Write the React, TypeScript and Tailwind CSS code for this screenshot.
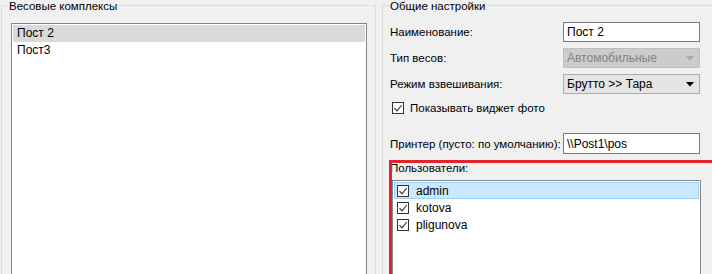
import React from 'react';

const font = { fontFamily: '"Liberation Sans", Arial, sans-serif' };

const Check = ({ className = '' }: { className?: string }) => (
  <span className={`flex h-[12px] w-[12px] shrink-0 items-center justify-center border border-[#333] bg-white ${className}`}>
    <svg width="10" height="10" viewBox="0 0 10 10">
      <path d="M1.5 5.2 L4 7.8 L8.8 2" fill="none" stroke="#333" strokeWidth="1.1" />
    </svg>
  </span>
);

const Arrow = ({ color }: { color: string }) => (
  <svg width="8" height="5" viewBox="0 0 8 5">
    <path d="M0 0 H8 L4 4.5 Z" fill={color} />
  </svg>
);

const GroupTitle = ({ text }: { text: string }) => (
  <span className="absolute left-[6px] top-[-6px] whitespace-nowrap bg-[#f0f0f0] px-[1px] text-[11.5px] leading-[12px] text-black">
    {text}
  </span>
);

const FormRow = ({ label, children, className = '' }: { label: string; children: React.ReactNode; className?: string }) => (
  <div className={`flex items-center ${className}`}>
    <div className="w-[173px] shrink-0 whitespace-nowrap text-[11.5px] leading-[14px] text-black">{label}</div>
    {children}
  </div>
);

const users = ['admin', 'kotova', 'pligunova'];

const App = () => {
  return (
    <div className="relative flex h-[274px] w-[712px] overflow-hidden bg-[#f0f0f0] text-[11.5px] leading-[14px]" style={font}>
      {/* Весовые комплексы */}
      <div className="relative ml-[1px] mt-[5px] h-[300px] w-[375px] shrink-0 border border-[#dcdcdc]">
        <GroupTitle text="Весовые комплексы" />
        <div className="ml-[9px] mt-[17px] h-[300px] w-[356px] border border-[#828790] bg-white p-[1px]">
          <div className="h-[17px] bg-[#d9d9d9] pl-[4px] text-[12px] leading-[17px] text-black">Пост 2</div>
          <div className="h-[17px] pl-[4px] text-[12px] leading-[17px] text-black">Пост3</div>
        </div>
      </div>

      {/* Общие настройки */}
      <div className="relative ml-[6px] mt-[5px] h-[300px] w-[340px] shrink-0 border border-[#dcdcdc] pl-[7px]">
        <GroupTitle text="Общие настройки" />
        <FormRow label="Наименование:" className="mt-[16px] h-[20px]">
          <div className="flex h-[20px] w-[137px] items-center border border-[#7a7a7a] bg-white pl-[3px] text-[12px] text-black">
            Пост 2
          </div>
        </FormRow>
        <FormRow label="Тип весов:" className="mt-[6px] h-[20px]">
          <div className="flex h-[20px] w-[137px] items-center justify-between border border-[#bfbfbf] bg-[#cccccc] pl-[3px] pr-[5px] text-[12px] text-[#838383]">
            Автомобильные
            <Arrow color="#a6a6a6" />
          </div>
        </FormRow>
        <FormRow label="Режим взвешивания:" className="mt-[6px] h-[20px]">
          <div className="flex h-[20px] w-[137px] items-center justify-between border border-[#adadad] bg-[#e5e5e5] pl-[3px] pr-[5px] text-[12px] text-black">
            Брутто &gt;&gt; Тара
            <Arrow color="#000" />
          </div>
        </FormRow>
        <div className="mt-[6px] flex h-[15px] items-center gap-[6px] pl-[2px]">
          <Check />
          <span className="text-black">Показывать виджет фото</span>
        </div>
        <FormRow label="Принтер (пусто: по умолчанию):" className="mt-[18px] h-[21px]">
          <div className="flex h-[21px] w-[137px] items-center border border-[#7a7a7a] bg-white pl-[3px] text-[12px] text-black">
            \\Post1\pos
          </div>
        </FormRow>
        <div className="mt-[7px] h-[14px] text-black">Пользователи:</div>
        <div className="ml-[2px] mt-[5px] h-[200px] w-[309px] border border-[#828790] bg-white p-[1px]">
          {users.map((u, i) => (
            <div
              key={u}
              className={`flex h-[17px] items-center gap-[7px] text-[12px] text-black ${
                i === 0 ? 'border border-[#99d1ff] bg-[#cce8ff] pl-[2px]' : 'pl-[3px]'
              }`}
            >
              <Check />
              <span>{u}</span>
            </div>
          ))}
        </div>
      </div>

      {/* red highlight */}
      <div className="absolute left-[389px] top-[160px] h-[130px] w-[340px] border-[3px] border-[#e3242b]" />
    </div>
  );
};

export default App;
